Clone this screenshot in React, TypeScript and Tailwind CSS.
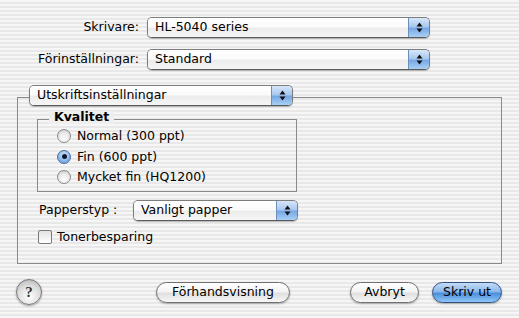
import React from 'react';

const font = "font-['DejaVu_Sans',sans-serif]";

function Arrows() {
  return (
    <svg width="7" height="11" viewBox="0 0 7 11">
      <path d="M3.5 0.5 L6.5 4.5 L0.5 4.5 Z" fill="#111" />
      <path d="M3.5 10.5 L6.5 6.5 L0.5 6.5 Z" fill="#111" />
    </svg>
  );
}

function Popup({ label, width }: { label: string; width: string }) {
  return (
    <div className={`${width} h-[21px] flex rounded-[5px] border border-[#7d7d7d] border-b-[#5a5a5a] shadow-[0_1px_1px_rgba(0,0,0,0.25)] overflow-hidden`}>
      <div className="flex-1 flex items-center pl-[7px] bg-[linear-gradient(to_bottom,#ffffff_0%,#fbfbfb_45%,#ececec_55%,#f6f6f6_100%)] text-[12.5px] text-black leading-none">
        {label}
      </div>
      <div className="w-[21px] flex items-center justify-center border-l border-[#6d8fbf] bg-[linear-gradient(to_bottom,#d6e6f9_0%,#a9c9ee_45%,#77a8e4_55%,#a8d0f6_100%)]">
        <Arrows />
      </div>
    </div>
  );
}

function Radio({ label, checked }: { label: string; checked?: boolean }) {
  return (
    <div className="flex items-center h-[20.5px]">
      {checked ? (
        <div className="w-[14px] h-[14px] rounded-full border border-[#4b6c9b] bg-[radial-gradient(circle_at_50%_35%,#d6e8fb_0%,#86b4ea_60%,#5b8fd4_100%)] flex items-center justify-center">
          <div className="w-[5px] h-[5px] rounded-full bg-[#101830]" />
        </div>
      ) : (
        <div className="w-[14px] h-[14px] rounded-full border border-[#8a8a8a] bg-[radial-gradient(circle_at_50%_70%,#ffffff_0%,#e8e8e8_55%,#c4c4c4_100%)]" />
      )}
      <span className="ml-[6px] text-[12.5px] text-black leading-none">{label}</span>
    </div>
  );
}

function Button({ label, width, primary }: { label: string; width: string; primary?: boolean }) {
  const look = primary
    ? 'border-[#31527f] bg-[linear-gradient(to_bottom,#c4dcf7_0%,#8ab8ec_45%,#4f8fdc_55%,#8fc6f8_100%)]'
    : 'border-[#6f6f6f] bg-[linear-gradient(to_bottom,#ffffff_0%,#f4f4f4_45%,#e0e0e0_55%,#f7f7f7_100%)]';
  return (
    <div className={`${width} h-[21px] rounded-full border ${look} shadow-[0_1px_2px_rgba(0,0,0,0.3)] flex items-center justify-center text-[12.5px] text-black leading-none`}>
      {label}
    </div>
  );
}

export default function App() {
  return (
    <div className={`${font} w-[519px] h-[318px] overflow-hidden bg-[image:repeating-linear-gradient(to_bottom,#f6f6f6_0px,#f6f6f6_2px,#e8e8e8_2px,#e8e8e8_4px)] flex flex-col`}>
      {/* printer + presets */}
      <div className="flex flex-col gap-[11px] pt-[17px]">
        <div className="flex items-center">
          <span className="w-[139px] text-right text-[12.5px] text-black">Skrivare:</span>
          <div className="ml-[8px]"><Popup label="HL-5040 series" width="w-[283px]" /></div>
        </div>
        <div className="flex items-center">
          <span className="w-[139px] text-right text-[12.5px] text-black">Förinställningar:</span>
          <div className="ml-[8px]"><Popup label="Standard" width="w-[283px]" /></div>
        </div>
      </div>

      {/* panel */}
      <div className="relative ml-[17px] mt-[27px] w-[485px] h-[167px] border border-[#8a8a8a]">
        <div className="absolute left-[11px] -top-[13px]">
          <Popup label="Utskriftsinställningar" width="w-[264px]" />
        </div>

        <div className="relative ml-[19px] mt-[21px] w-[260px] h-[73px] border border-[#8a8a8a] pl-[19px] pt-[6px]">
          <span className="absolute left-[11px] -top-[9px] px-[5px] bg-[#efefef] text-[12.5px] font-bold text-black leading-none">Kvalitet</span>
          <Radio label="Normal (300 ppt)" />
          <Radio label="Fin (600 ppt)" checked />
          <Radio label="Mycket fin (HQ1200)" />
        </div>

        <div className="flex items-center ml-[21px] mt-[8px]">
          <span className="w-[94px] text-[12.5px] text-black">Papperstyp :</span>
          <Popup label="Vanligt papper" width="w-[165px]" />
        </div>

        <div className="flex items-center ml-[20px] mt-[9px]">
          <div className="w-[14px] h-[14px] rounded-[2px] border border-[#7a7a7a] bg-[linear-gradient(to_bottom,#e2e2e2_0%,#ffffff_100%)]" />
          <span className="ml-[5px] text-[12.5px] text-black leading-none">Tonerbesparing</span>
        </div>
      </div>

      {/* buttons */}
      <div className="flex items-center mt-[15px] pl-[16px]">
        <div className="w-[26px] h-[26px] rounded-full border border-[#777] bg-[radial-gradient(circle_at_50%_70%,#ffffff_0%,#dcdcdc_55%,#a9a9a9_100%)] shadow-[0_1px_2px_rgba(0,0,0,0.35)] flex items-center justify-center text-[15px] font-bold text-[#333] font-['Liberation_Serif',serif]">
          ?
        </div>
        <div className="ml-[114px]"><Button label="Förhandsvisning" width="w-[134px]" /></div>
        <div className="ml-[60px]"><Button label="Avbryt" width="w-[69px]" /></div>
        <div className="ml-[13px]"><Button label="Skriv ut" width="w-[70px]" primary /></div>
      </div>
    </div>
  );
}
